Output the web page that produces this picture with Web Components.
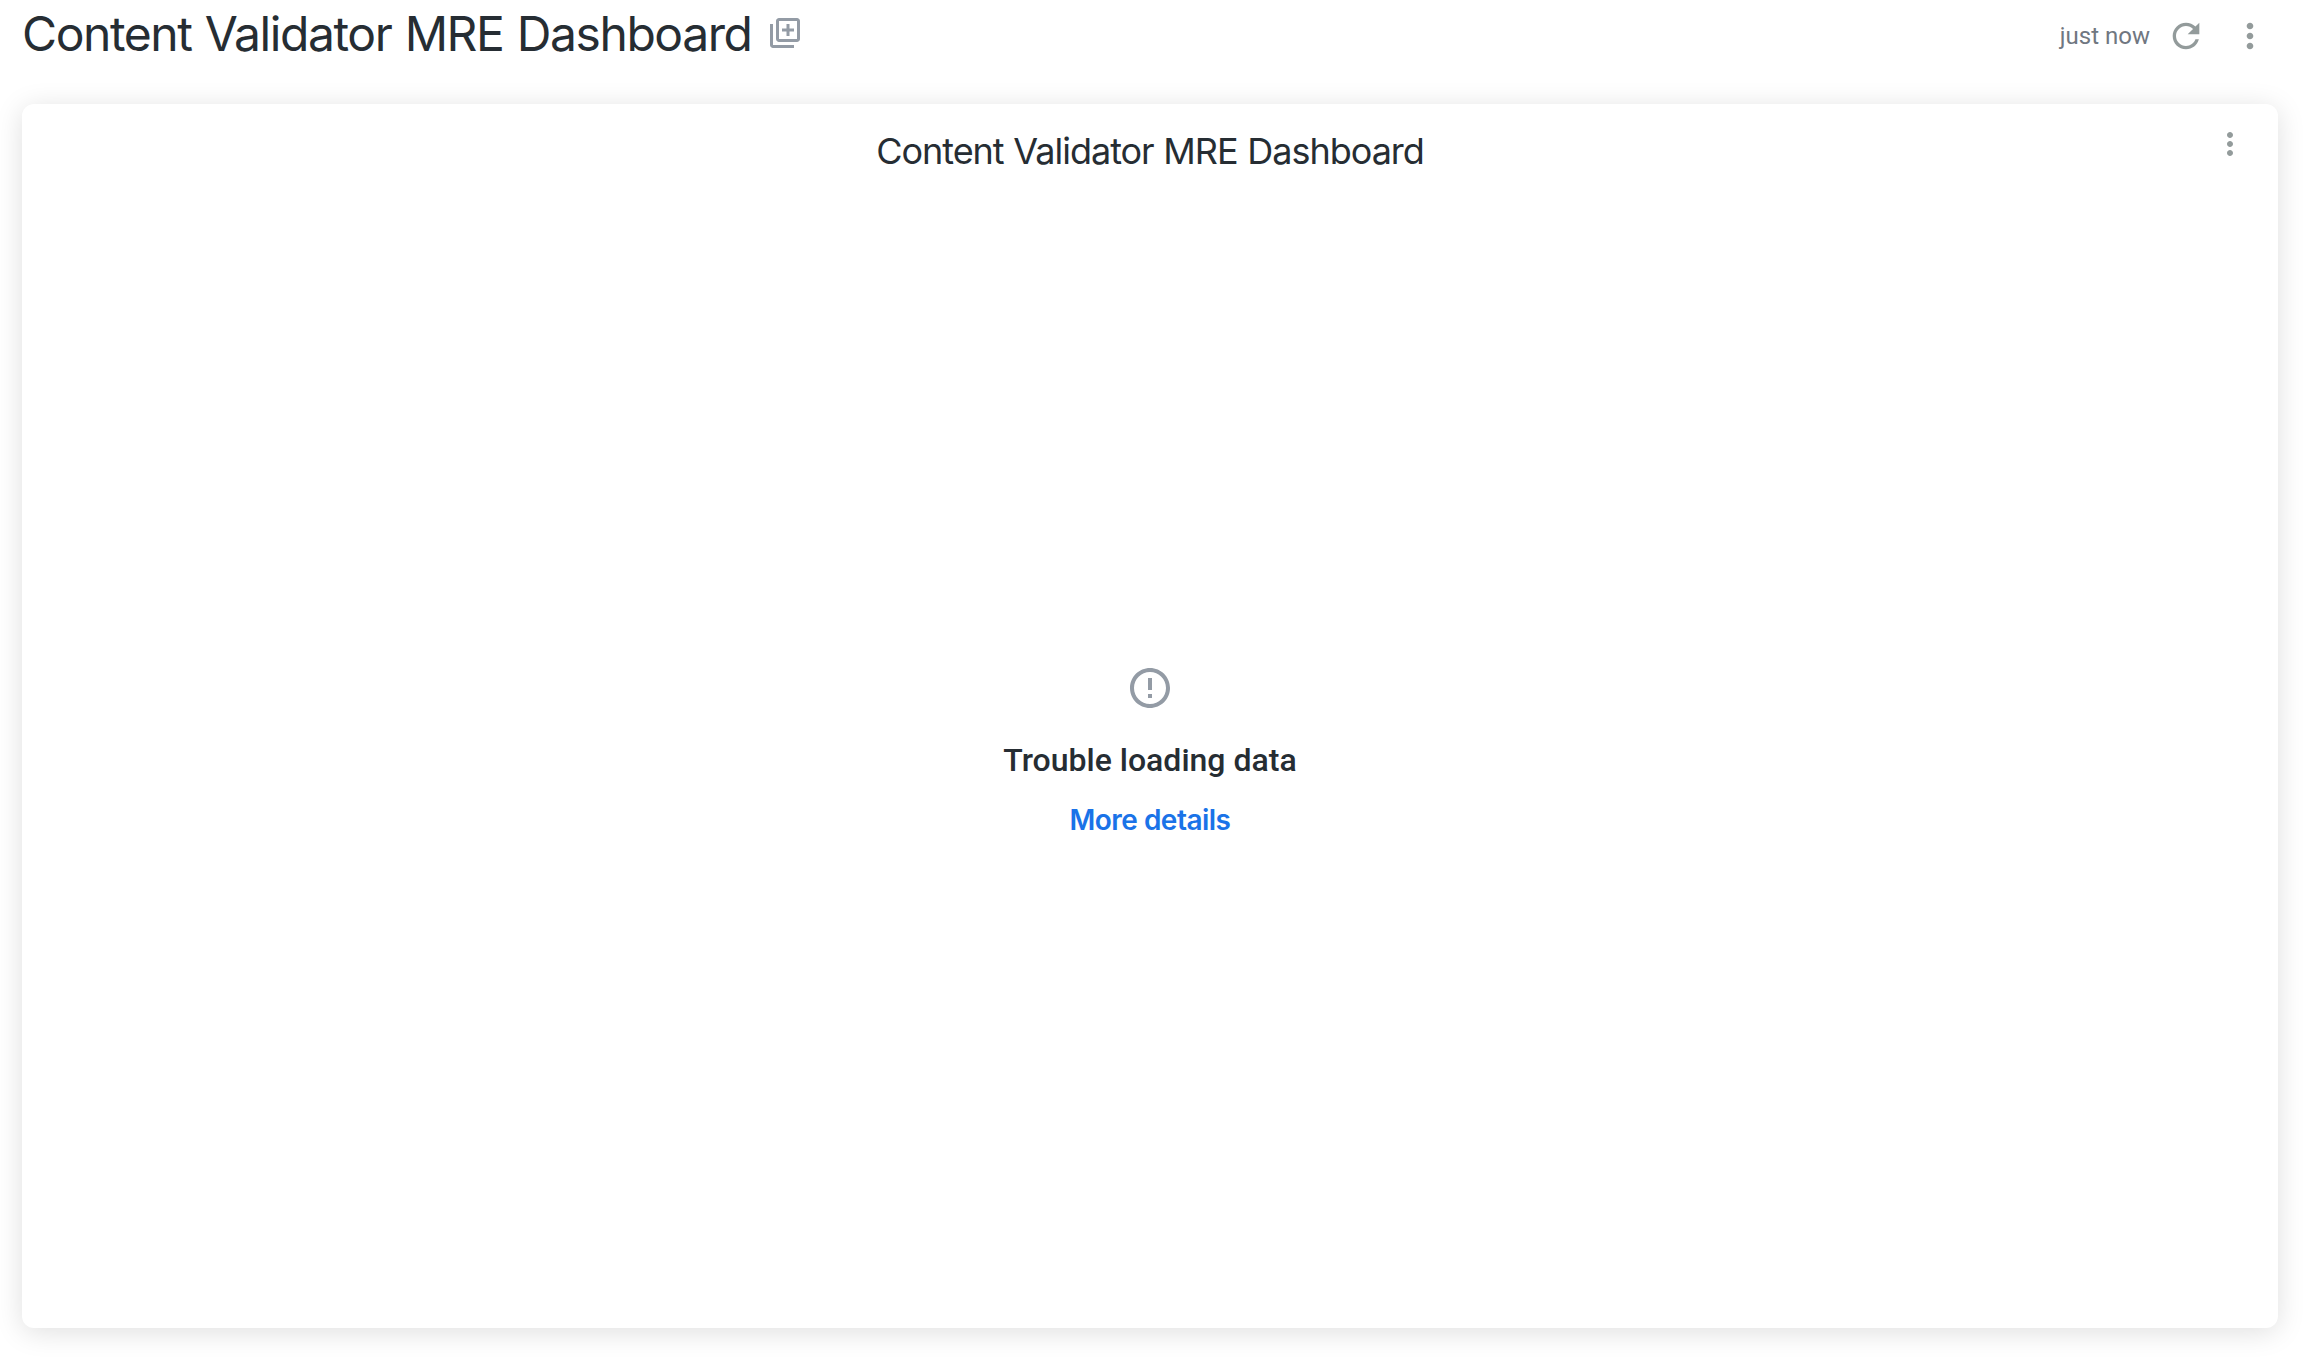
<!DOCTYPE html>
<html lang="en"><head><meta charset="utf-8"><title>Content Validator MRE Dashboard</title>
<style>html,body{margin:0;height:100%;background:#fff;overflow:hidden}</style></head>
<body><dashboard-page></dashboard-page>
<script>
const ICONS = {
  add: 'M20 2H8c-1.1 0-2 .9-2 2v12c0 1.1.9 2 2 2h12c1.1 0 2-.9 2-2V4c0-1.1-.9-2-2-2zm0 14H8V4h12v12zM4 6H2v14c0 1.1.9 2 2 2h14v-2H4V6zM13 14h2v-3h3V9h-3V6h-2v3h-3v2h3z',
  refresh: 'M17.65 6.35C16.2 4.9 14.21 4 12 4c-4.42 0-7.99 3.58-7.99 8s3.57 8 7.99 8c3.73 0 6.84-2.55 7.73-6h-2.08c-.82 2.33-3.04 4-5.65 4-3.31 0-6-2.69-6-6s2.69-6 6-6c1.66 0 3.14.69 4.22 1.78L13 11h7V4l-2.35 2.35z',
  more: 'M12 8c1.1 0 2-.9 2-2s-.9-2-2-2-2 .9-2 2 .9 2 2 2zm0 2c-1.1 0-2 .9-2 2s.9 2 2 2 2-.9 2-2-.9-2-2-2zm0 6c-1.1 0-2 .9-2 2s.9 2 2 2 2-.9 2-2-.9-2-2-2z',
  error: 'M11 15h2v2h-2zm0-8h2v6h-2zm1-5C6.48 2 2 6.48 2 12s4.47 10 10 10 10-4.48 10-10S17.52 2 12 2zm0 18c-4.42 0-8-3.58-8-8s3.58-8 8-8 8 3.58 8 8-3.58 8-8 8z'
};
customElements.define('ui-icon', class extends HTMLElement {
  connectedCallback() {
    const s = this.getAttribute('size');
    this.attachShadow({mode:'open'}).innerHTML =
      `<style>:host{display:block;flex:none;width:${s}px;height:${s}px}svg{display:block;width:100%;height:100%;fill:currentColor}</style>
       <svg viewBox="0 0 24 24"><path d="${ICONS[this.getAttribute('name')]}"/></svg>`;
  }
});
customElements.define('dashboard-header', class extends HTMLElement {
  constructor() {
    super();
    this.attachShadow({mode:'open'}).innerHTML = `<style>
      :host{display:flex;align-items:flex-start;justify-content:space-between;height:104px;box-sizing:border-box;padding:0 36px 0 22px}
      .left,.right{display:flex}
      h1{margin:0;padding-top:4px;width:745px;font:400 48px/60px Inter,sans-serif;letter-spacing:-1.42px;word-spacing:1.2px;white-space:nowrap;color:#262d33}
      .left ui-icon{margin-top:15px;color:#939ba5}
      .right{align-items:center;padding-top:16px;color:#939b9b}
      .time{font:400 24px/40px Roboto,sans-serif;color:#707781;margin-right:16px}
      .menu{margin-left:24px}
      </style>
      <div class="left"><h1><slot></slot></h1><ui-icon name="add" size="36"></ui-icon></div>
      <div class="right"><span class="time">just now</span><ui-icon name="refresh" size="40"></ui-icon><ui-icon class="menu" name="more" size="40"></ui-icon></div>`;
  }
});
customElements.define('error-state', class extends HTMLElement {
  constructor() {
    super();
    this.attachShadow({mode:'open'}).innerHTML = `<style>
      :host{display:flex;flex-direction:column;align-items:center}
      ui-icon{color:#939ba5}
      p{margin:28px 0 0;font:500 32px/40px Roboto,sans-serif;color:#262d33}
      a{margin-top:22px;font:600 28px/36px Inter,sans-serif;letter-spacing:-.52px;color:#1a73e8}
      </style><ui-icon name="error" size="48"></ui-icon><p><slot></slot></p><a>More details</a>`;
  }
});
customElements.define('dashboard-tile', class extends HTMLElement {
  constructor() {
    super();
    this.attachShadow({mode:'open'}).innerHTML = `<style>
      :host{display:flex;flex-direction:column;box-sizing:border-box;height:1224px;margin:0 28px 0 22px;border-radius:12px;background:#fff;box-shadow:0 4px 28px rgba(0,0,0,.13)}
      header{display:grid;grid-template-columns:1fr auto 1fr;height:560px;padding:0 30px}
      h2{grid-column:2;margin:0;padding-top:25px;font:400 36px/44px Inter,sans-serif;letter-spacing:-1.02px;word-spacing:.6px;white-space:nowrap;color:#262d33}
      ui-icon{justify-self:end;margin-top:22px;color:#939b9b}
      </style><header><h2><slot name="title"></slot></h2><ui-icon name="more" size="36"></ui-icon></header><slot></slot>`;
  }
});
customElements.define('dashboard-page', class extends HTMLElement {
  constructor() {
    super();
    this.attachShadow({mode:'open'}).innerHTML = `<style>:host{display:block;height:1364px;background:#fff}</style>
      <dashboard-header>Content Validator MRE Dashboard</dashboard-header>
      <dashboard-tile><span slot="title">Content Validator MRE Dashboard</span><error-state>Trouble loading data</error-state></dashboard-tile>`;
  }
});
</script></body></html>
